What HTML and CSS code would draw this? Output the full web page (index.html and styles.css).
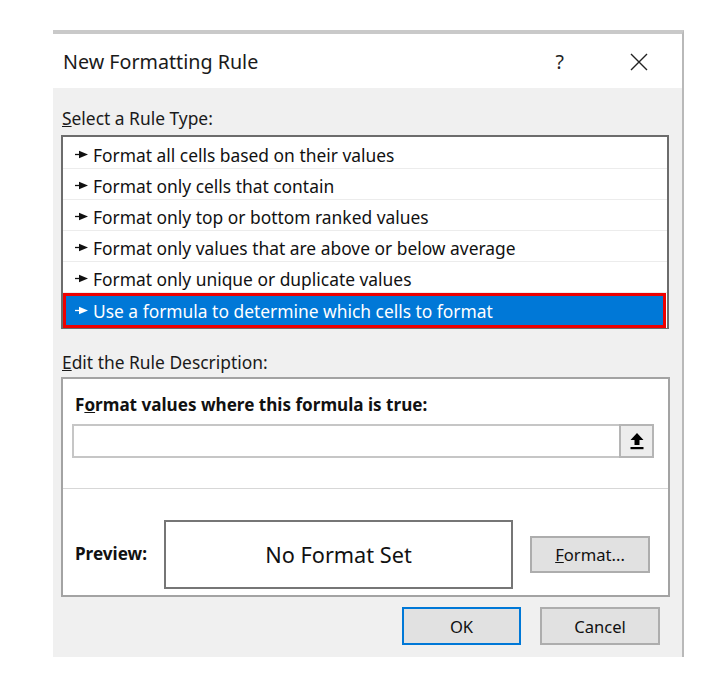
FILE: index.html
```html
<!DOCTYPE html>
<html>
<head>
<meta charset="utf-8">
<link rel="stylesheet" href="styles.css">
</head>
<body>
<div class="page">
  <div class="dialog">
    <div class="titlebar">
      <span class="title">New Formatting Rule</span>
      <span class="help">?</span>
      <svg class="close" width="18" height="18" viewBox="0 0 18 18"><path d="M1 1 L17 17 M17 1 L1 17" stroke="#222" stroke-width="1.4" fill="none"/></svg>
    </div>
    <div class="body">
      <div class="label"><u>S</u>elect a Rule Type:</div>
      <div class="list">
        <div class="row"><svg class="arr" width="13" height="9" viewBox="0 0 13 9"><path d="M0 4.5 H5" stroke="#111" stroke-width="1.3"/><path d="M4 0.8 L13 4.5 L4 8.2 Z" fill="#111"/></svg><span>Format all cells based on their values</span></div>
        <div class="row"><svg class="arr" width="13" height="9" viewBox="0 0 13 9"><path d="M0 4.5 H5" stroke="#111" stroke-width="1.3"/><path d="M4 0.8 L13 4.5 L4 8.2 Z" fill="#111"/></svg><span>Format only cells that contain</span></div>
        <div class="row"><svg class="arr" width="13" height="9" viewBox="0 0 13 9"><path d="M0 4.5 H5" stroke="#111" stroke-width="1.3"/><path d="M4 0.8 L13 4.5 L4 8.2 Z" fill="#111"/></svg><span>Format only top or bottom ranked values</span></div>
        <div class="row"><svg class="arr" width="13" height="9" viewBox="0 0 13 9"><path d="M0 4.5 H5" stroke="#111" stroke-width="1.3"/><path d="M4 0.8 L13 4.5 L4 8.2 Z" fill="#111"/></svg><span>Format only values that are above or below average</span></div>
        <div class="row"><svg class="arr" width="13" height="9" viewBox="0 0 13 9"><path d="M0 4.5 H5" stroke="#111" stroke-width="1.3"/><path d="M4 0.8 L13 4.5 L4 8.2 Z" fill="#111"/></svg><span>Format only unique or duplicate values</span></div>
        <div class="row selected"><svg class="arr" width="13" height="9" viewBox="0 0 13 9"><path d="M0 4.5 H5" stroke="#fff" stroke-width="1.3"/><path d="M4 0.8 L13 4.5 L4 8.2 Z" fill="#fff"/></svg><span>Use a formula to determine which cells to format</span></div>
      </div>
      <div class="label label2"><u>E</u>dit the Rule Description:</div>
      <div class="desc">
        <div class="desc-top">
          <div class="bold">F<u>o</u>rmat values where this formula is true:</div>
          <div class="input">
            <div class="field"></div>
            <div class="refbtn">
              <svg width="16" height="18" viewBox="0 0 16 18"><path d="M8 1 L14.5 8 H10.5 V13 H5.5 V8 H1.5 Z" fill="#000"/><rect x="1.5" y="15" width="13" height="2.2" fill="#000"/></svg>
            </div>
          </div>
        </div>
        <div class="desc-bottom">
          <div class="bold prev-label">Preview:</div>
          <div class="preview">No Format Set</div>
          <div class="btn fmt"><u>F</u>ormat...</div>
        </div>
      </div>
      <div class="actions">
        <div class="btn ok">OK</div>
        <div class="btn cancel">Cancel</div>
      </div>
    </div>
  </div>
  <div class="gridline"></div>
</div>
</body>
</html>
```
FILE: styles.css
```css
* { box-sizing: border-box; }
html, body { margin: 0; padding: 0; background: #fff; }
body { font-family: "Noto Sans", "Open Sans", sans-serif; color: #1a1a1a; }
.page { padding: 30px 0 0 53px; display: flex; align-items: flex-start; }
.dialog {
  width: 631px;
  border-top: 4px solid #c9c9c9;
  border-right: 2px solid #b9b9b9;
  background: #f0f0f0;
}
.gridline {
  width: 5px;
  height: 630px;
  background: repeating-linear-gradient(to bottom, transparent 0, transparent 68px, #cfcfcf 68px, #cfcfcf 69px, transparent 69px, transparent 101px);
  background-size: 5px 50.4px;
  background-position: 0 -1px;
}
.titlebar {
  height: 54px;
  background: #fff;
  display: flex;
  align-items: center;
  padding-left: 10px;
  padding-top: 1px;
}
.title { font-size: 19.7px; flex: 1; color: #1a1a1a; }
.help { font-size: 19.5px; margin-right: 66px; color: #222; }
.close { margin-right: 34px; }
.body { padding: 19px 0 12px 8px; }
.label { font-size: 17.4px; line-height: 22px; padding-left: 1px; color: #1a1a1a; }
.list {
  margin-top: 6px;
  width: 608px;
  background: #fff;
  border: 2px solid #6c6c6c;
  border-bottom-width: 1px;
  padding-top: 1px;
}
.row {
  height: 31px;
  border-bottom: 1px solid #ececec;
  display: flex;
  align-items: center;
  padding-left: 12px;
  padding-top: 3px;
  font-size: 17.4px;
  color: #111;
}
.arr { margin-right: 5px; margin-top: -1px; }
.row.selected {
  height: 35px;
  border: 3px solid #ee0000;
  background: #0078d7;
  color: #fff;
  padding-left: 9px;
  padding-top: 0;
  margin: 0 1px 0 0;
}
.label2 { margin-top: 22px; }
.desc {
  margin-top: 4px;
  width: 609px;
  height: 220px;
  background: #fff;
  border: 2px solid #a3a3a3;
  display: flex;
  flex-direction: column;
}
.desc-top { padding: 15px 14px 0 9px; height: 110px; border-bottom: 1px solid #d7d7d7; }
.bold { font-weight: bold; font-size: 17.1px; line-height: 22px; padding-left: 3px; color: #111; }
.input { margin-top: 8px; display: flex; height: 34px; border: 2px solid #c6c6c6; background: #fff; }
.field { flex: 1; }
.refbtn {
  width: 35px;
  margin: -2px -2px -2px 0;
  background: #ededed;
  border: 2px solid #b5b5b5;
  display: flex;
  align-items: center;
  justify-content: center;
}
.desc-bottom { flex: 1; display: flex; align-items: center; padding: 24px 0 0 12px; }
.prev-label { width: 89px; padding-left: 0; }
.preview {
  width: 349px;
  height: 69px;
  border: 2px solid #767676;
  display: flex;
  align-items: center;
  justify-content: center;
  font-size: 21.7px;
  color: #111;
}
.btn {
  background: #e1e1e1;
  border: 2px solid #adadad;
  display: flex;
  align-items: center;
  justify-content: center;
  font-size: 16.6px;
  color: #111;
}
.fmt { width: 120px; height: 37px; margin-left: 17px; }
.actions { display: flex; justify-content: flex-end; gap: 19px; padding-right: 22px; margin-top: 10px; }
.ok { width: 119px; height: 38px; border-color: #0078d7; }
.cancel { width: 120px; height: 38px; }
```
